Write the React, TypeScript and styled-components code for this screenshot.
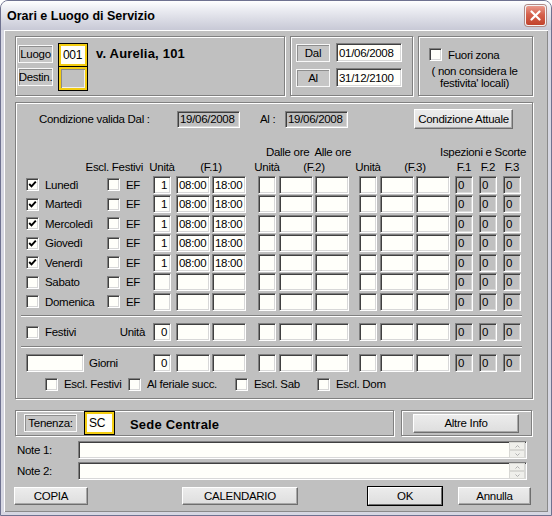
import React from 'react';
import styled, {createGlobalStyle} from 'styled-components';

const GlobalStyle = createGlobalStyle`
  html, body {
    margin: 0;
    padding: 0;
    background: #ffffff;
  }
  body {
    font-family: 'Liberation Sans', Arial, sans-serif;
    font-size: 11.5px;
    letter-spacing: -0.3px;
    color: #000;
  }
`;

const COLS = '81px 46px 23px 36px 46px 21px 36px 44px 21px 36px 39px 24px 24px 18px';

const Window = styled.div`
  box-sizing: border-box;
  width: 552px;
  height: 516px;
  display: flex;
  flex-direction: column;
  background: #d6d7e2;
  border: 1px solid #6f7290;
  border-radius: 8px 8px 0 0;
  overflow: hidden;
`;

const TitleBar = styled.div`
  flex: none;
  height: 29px;
  display: flex;
  align-items: center;
  justify-content: space-between;
  padding: 0 5px 0 6px;
  background: linear-gradient(to bottom, #ffffff 0%, #eeeff4 25%, #dcdde6 60%, #c8c9d6 100%);
`;

const Title = styled.span`
  font-weight: bold;
  font-size: 12.5px;
  letter-spacing: 0;
  color: #000;
`;

const CloseButton = styled.div`
  box-sizing: border-box;
  width: 21px;
  height: 21px;
  border-radius: 3px;
  border: 1px solid #f4f4f4;
  background: linear-gradient(to bottom, #e99a8c 0%, #d5614c 45%, #c2432d 100%);
  display: flex;
  align-items: center;
  justify-content: center;
  box-shadow: 0 0 0 1px #b08a86;
`;

const Client = styled.div`
  flex: 1;
  margin: 0 3px 3px;
  background: #c0c0c0;
  padding: 6px 11px 0;
  display: flex;
  flex-direction: column;
  box-shadow: inset 1px 1px 0 #ffffff, inset -1px -1px 0 #8a8a8a;
`;

const Group = styled.div<{$w: number; $h: number}>`
  box-sizing: border-box;
  width: ${(p) => p.$w}px;
  height: ${(p) => p.$h}px;
  border: 1px solid #808080;
  box-shadow: inset 1px 1px 0 #ffffff, 1px 1px 0 #ffffff;
`;

const TopRow = styled.div`
  display: flex;
  gap: 5px;
`;

const LuogoGroup = styled(Group)`
  display: flex;
  align-items: flex-start;
  padding: 6px 2px;
`;

const LabelStack = styled.div`
  display: flex;
  flex-direction: column;
  gap: 5px;
  margin-top: 2px;
`;

const Tag = styled.div<{$w: number}>`
  box-sizing: border-box;
  width: ${(p) => p.$w}px;
  height: 18px;
  display: flex;
  align-items: center;
  justify-content: center;
  background: #c6c6c6;
  border: 1px solid #f8f8f8;
  box-shadow: inset 1px 1px 0 #8e8e8e;
  white-space: nowrap;
`;

const FocusStack = styled.div`
  display: flex;
  flex-direction: column;
  margin-left: 5px;
`;

const FocusBox = styled.div<{$w: number; $h: number}>`
  box-sizing: border-box;
  width: ${(p) => p.$w}px;
  height: ${(p) => p.$h}px;
  border: 1px solid #000;
  padding: 2px;
  background: #f2cc10;
  & + & {
    margin-top: -1px;
  }
`;

const FocusInner = styled.div<{$empty?: boolean}>`
  box-sizing: border-box;
  height: 100%;
  display: flex;
  align-items: center;
  padding-left: 2px;
  font-size: 12px;
  background: ${(p) => (p.$empty ? '#c0c0c0' : '#fffffa')};
  box-shadow: ${(p) => (p.$empty ? 'inset 1px 1px 0 #8a8a8a, inset -1px -1px 0 #f0f0f0' : 'none')};
`;

const BigText = styled.div`
  font-weight: bold;
  font-size: 13px;
  letter-spacing: 0.2px;
  margin-left: 8px;
  margin-top: 3px;
`;

const DateGroup = styled(Group)`
  display: flex;
  flex-direction: column;
  gap: 6px;
  padding: 6px 0 0 5px;
`;

const DateRow = styled.div`
  display: flex;
  align-items: center;
  gap: 6px;
`;

const FuoriGroup = styled(Group)`
  padding: 11px 8px 0 10px;
`;

const NoteText = styled.div`
  margin-top: 4px;
  text-align: center;
  line-height: 12px;
  padding-right: 4px;
`;

const Field = styled.div<{$w: number; $ro?: boolean; $right?: boolean; $h?: number}>`
  box-sizing: border-box;
  flex: none;
  width: ${(p) => p.$w}px;
  height: ${(p) => p.$h ?? 18}px;
  display: flex;
  align-items: center;
  justify-content: ${(p) => (p.$right ? 'flex-end' : 'flex-start')};
  padding: 0 3px 0 2px;
  background: ${(p) => (p.$ro ? '#c0c0c0' : '#fffffa')};
  border: 1px solid;
  border-color: #808080 #ffffff #ffffff #808080;
  box-shadow: inset 1px 1px 0 #404040, inset -1px -1px 0 #d8d8d8;
  white-space: nowrap;
  overflow: hidden;
`;

const Box = styled.span`
  box-sizing: border-box;
  flex: none;
  width: 13px;
  height: 13px;
  display: inline-flex;
  align-items: center;
  justify-content: center;
  background: #fffffa;
  border: 1px solid;
  border-color: #808080 #ffffff #ffffff #808080;
  box-shadow: inset 1px 1px 0 #404040, inset -1px -1px 0 #d8d8d8;
`;

const CheckLabel = styled.div<{$w?: number}>`
  display: flex;
  align-items: center;
  gap: 6px;
  white-space: nowrap;
  ${(p) => (p.$w ? `width: ${p.$w}px;` : '')}
`;

function Check({on, label, w}: {on?: boolean; label?: string; w?: number}) {
  return (
    <CheckLabel $w={w}>
      <Box>
        {on && (
          <svg width="9" height="9" viewBox="0 0 9 9">
            <polyline points="1.2,4 3.5,6.4 7.8,1.6" fill="none" stroke="#000" strokeWidth="1.9" />
          </svg>
        )}
      </Box>
      {label && <span>{label}</span>}
    </CheckLabel>
  );
}

const MainGroup = styled(Group)`
  margin-top: 6px;
  padding: 6px 0 0 10px;
  display: flex;
  flex-direction: column;
`;

const CondRow = styled.div`
  display: flex;
  align-items: center;
  height: 20px;
`;

const CondLabel = styled.span<{$w: number; $ml?: number}>`
  width: ${(p) => p.$w}px;
  margin-left: ${(p) => p.$ml ?? 0}px;
  white-space: nowrap;
`;

const Button = styled.div<{$w: number; $h?: number; $ml?: number; $default?: boolean}>`
  box-sizing: border-box;
  width: ${(p) => p.$w}px;
  height: ${(p) => p.$h ?? 18}px;
  margin-left: ${(p) => p.$ml ?? 0}px;
  display: flex;
  align-items: center;
  justify-content: center;
  background: linear-gradient(to bottom, #ececec, #dedede);
  border: 1px solid;
  border-color: #ffffff #6e6e6e #6e6e6e #ffffff;
  box-shadow: ${(p) => (p.$default ? '0 0 0 1px #000' : 'inset -1px -1px 0 #a8a8a8')};
  white-space: nowrap;
`;

const HeadGrid = styled.div`
  display: grid;
  grid-template-columns: ${COLS};
  grid-template-rows: 14px 16px;
  margin-top: 16px;
`;

const HeadCell = styled.div<{$col: string; $row: number; $align?: string; $w?: number; $pl?: number; $pr?: number}>`
  box-sizing: border-box;
  grid-column: ${(p) => p.$col};
  grid-row: ${(p) => p.$row};
  display: flex;
  align-items: center;
  justify-content: ${(p) => p.$align ?? 'center'};
  ${(p) => (p.$w ? `width: ${p.$w}px;` : '')}
  padding-left: ${(p) => p.$pl ?? 0}px;
  padding-right: ${(p) => p.$pr ?? 0}px;
  white-space: pre;
`;

const DataRow = styled.div<{$mt?: number}>`
  display: grid;
  grid-template-columns: ${COLS};
  height: 19.5px;
  align-items: center;
  margin-top: ${(p) => p.$mt ?? 0}px;
`;

const Separator = styled.div<{$mt: number}>`
  margin: ${(p) => p.$mt}px 0 0 -5px;
  width: 501px;
  height: 1px;
  background: #808080;
  border-bottom: 1px solid #ffffff;
`;

const RightLabel = styled.span`
  justify-self: end;
  padding-right: 8px;
`;

const GiorniCell = styled.div`
  grid-column: 1 / 3;
  display: flex;
  align-items: center;
  gap: 5px;
`;

const OptRow = styled.div`
  display: flex;
  align-items: center;
  height: 15px;
  margin: 4px 0 0 19px;
`;

const BottomRow = styled.div`
  display: flex;
  gap: 7px;
  margin-top: 11px;
`;

const TenenzaGroup = styled(Group)`
  display: flex;
  align-items: center;
  padding-left: 8px;
  gap: 7px;
`;

const AltreGroup = styled(Group)`
  display: flex;
  align-items: center;
  padding-left: 11px;
`;

const NotesBlock = styled.div`
  display: flex;
  flex-direction: column;
  gap: 3px;
  margin-top: 5px;
`;

const NoteRow = styled.div`
  display: flex;
  align-items: center;
`;

const NoteLabel = styled.span`
  width: 61px;
  margin-left: 2px;
`;

const NoteField = styled(Field)`
  justify-content: flex-end;
  padding: 0 1px 0 0;
`;

const Spin = styled.div`
  display: flex;
  flex-direction: column;
`;

const SpinBtn = styled.div`
  box-sizing: border-box;
  width: 16px;
  height: 8px;
  background: #efefeb;
  border: 1px solid #d8d8d4;
  display: flex;
  align-items: center;
  justify-content: center;
`;

function Arrow({up}: {up?: boolean}) {
  return (
    <svg width="5" height="3" viewBox="0 0 5 3">
      <polyline points={up ? '0.5,2.5 2.5,0.5 4.5,2.5' : '0.5,0.5 2.5,2.5 4.5,0.5'} fill="none" stroke="#b0b0b0" strokeWidth="1" />
    </svg>
  );
}

const ButtonRow = styled.div`
  display: flex;
  margin: 7px 0 0 -1px;
`;

interface IDay {
  name: string;
  on: boolean;
}

const days: IDay[] = [
  {name: 'Lunedì', on: true},
  {name: 'Martedì', on: true},
  {name: 'Mercoledì', on: true},
  {name: 'Giovedì', on: true},
  {name: 'Venerdì', on: true},
  {name: 'Sabato', on: false},
  {name: 'Domenica', on: false},
];

function Slots({unit, from, to}: {unit?: string; from?: string; to?: string}) {
  return (
    <>
      <Field $w={18} $right>{unit}</Field>
      <Field $w={34}>{from}</Field>
      <Field $w={34}>{to}</Field>
      <Field $w={18} />
      <Field $w={34} />
      <Field $w={34} />
      <Field $w={18} />
      <Field $w={34} />
      <Field $w={34} />
      <Field $w={18} $ro>0</Field>
      <Field $w={18} $ro>0</Field>
      <Field $w={18} $ro>0</Field>
    </>
  );
}

function App() {
  return (
    <Window>
      <GlobalStyle />
      <TitleBar>
        <Title>Orari e Luogo di Servizio</Title>
        <CloseButton>
          <svg width="11" height="11" viewBox="0 0 11 11">
            <path d="M1.5 1.5 L9.5 9.5 M9.5 1.5 L1.5 9.5" stroke="#fff" strokeWidth="2.2" strokeLinecap="round" />
          </svg>
        </CloseButton>
      </TitleBar>
      <Client>
        <TopRow>
          <LuogoGroup $w={270} $h={60}>
            <LabelStack>
              <Tag $w={35}>Luogo</Tag>
              <Tag $w={35}>Destin.</Tag>
            </LabelStack>
            <FocusStack>
              <FocusBox $w={30} $h={24}>
                <FocusInner>001</FocusInner>
              </FocusBox>
              <FocusBox $w={30} $h={25}>
                <FocusInner $empty />
              </FocusBox>
            </FocusStack>
            <BigText>v. Aurelia, 101</BigText>
          </LuogoGroup>
          <DateGroup $w={123} $h={60}>
            <DateRow>
              <Tag $w={34}>Dal</Tag>
              <Field $w={66} $h={19}>01/06/2008</Field>
            </DateRow>
            <DateRow>
              <Tag $w={34}>Al</Tag>
              <Field $w={66} $h={19}>31/12/2100</Field>
            </DateRow>
          </DateGroup>
          <FuoriGroup $w={115} $h={60}>
            <Check label="Fuori zona" />
            <NoteText>
              ( non considera le
              <br />
              festivita' locali)
            </NoteText>
          </FuoriGroup>
        </TopRow>

        <MainGroup $w={518} $h={297}>
          <CondRow>
            <CondLabel $w={138} $ml={13}>Condizione valida Dal :</CondLabel>
            <Field $w={63} $h={17} $ro>19/06/2008</Field>
            <CondLabel $w={25} $ml={20}>Al :</CondLabel>
            <Field $w={63} $h={17} $ro>19/06/2008</Field>
            <Button $w={99} $h={20} $ml={66}>Condizione Attuale</Button>
          </CondRow>

          <HeadGrid>
            <HeadCell $col="6 / 9" $row={1} $align="flex-start" $pl={8}>{'Dalle ore  Alle ore'}</HeadCell>
            <HeadCell $col="12 / 15" $row={1} $w={66} $pr={10}>Ispezioni e Scorte</HeadCell>
            <HeadCell $col="1 / 3" $row={2} $align="flex-end" $pr={10}>Escl. Festivi</HeadCell>
            <HeadCell $col="3" $row={2} $w={18}>Unità</HeadCell>
            <HeadCell $col="4 / 6" $row={2} $w={70}>(F.1)</HeadCell>
            <HeadCell $col="6" $row={2} $w={18}>Unità</HeadCell>
            <HeadCell $col="7 / 9" $row={2} $w={70}>(F.2)</HeadCell>
            <HeadCell $col="9" $row={2} $w={18}>Unità</HeadCell>
            <HeadCell $col="10 / 12" $row={2} $w={70}>(F.3)</HeadCell>
            <HeadCell $col="12" $row={2} $w={18}>F.1</HeadCell>
            <HeadCell $col="13" $row={2} $w={18}>F.2</HeadCell>
            <HeadCell $col="14" $row={2} $w={18}>F.3</HeadCell>
          </HeadGrid>

          {days.map((d) => (
            <DataRow key={d.name}>
              <Check on={d.on} label={d.name} />
              <Check label="EF" />
              {d.on ? <Slots unit="1" from="08:00" to="18:00" /> : <Slots />}
            </DataRow>
          ))}

          <Separator $mt={3} />
          <DataRow $mt={6}>
            <Check label="Festivi" />
            <RightLabel>Unità</RightLabel>
            <Slots unit="0" />
          </DataRow>

          <Separator $mt={4} />
          <DataRow $mt={5}>
            <GiorniCell>
              <Field $w={58} />
              <span>Giorni</span>
            </GiorniCell>
            <Slots unit="0" />
          </DataRow>

          <OptRow>
            <Check label="Escl. Festivi" w={83} />
            <Check label="Al feriale succ." w={107} />
            <Check label="Escl. Sab" w={82} />
            <Check label="Escl. Dom" />
          </OptRow>
        </MainGroup>

        <BottomRow>
          <TenenzaGroup $w={379} $h={26}>
            <Tag $w={53}>Tenenza:</Tag>
            <FocusBox $w={31} $h={24}>
              <FocusInner>SC</FocusInner>
            </FocusBox>
            <BigText>Sede Centrale</BigText>
          </TenenzaGroup>
          <AltreGroup $w={131} $h={26}>
            <Button $w={106} $h={19}>Altre Info</Button>
          </AltreGroup>
        </BottomRow>

        <NotesBlock>
          {['Note 1:', 'Note 2:'].map((n) => (
            <NoteRow key={n}>
              <NoteLabel>{n}</NoteLabel>
              <NoteField $w={449}>
                <Spin>
                  <SpinBtn>
                    <Arrow up />
                  </SpinBtn>
                  <SpinBtn>
                    <Arrow />
                  </SpinBtn>
                </Spin>
              </NoteField>
            </NoteRow>
          ))}
        </NotesBlock>

        <ButtonRow>
          <Button $w={74}>COPIA</Button>
          <Button $w={116} $ml={94}>CALENDARIO</Button>
          <Button $w={74} $ml={70} $default>OK</Button>
          <Button $w={73} $ml={16}>Annulla</Button>
        </ButtonRow>
      </Client>
    </Window>
  );
}

export default App;
